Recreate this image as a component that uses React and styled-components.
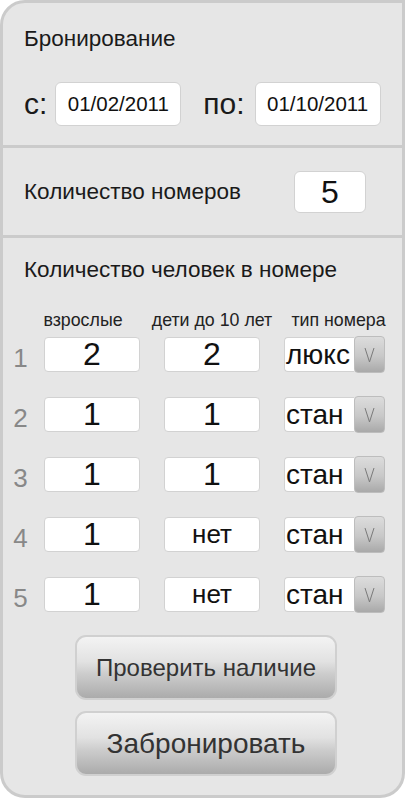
import React from 'react';
import styled, { createGlobalStyle } from 'styled-components';

const GlobalStyle = createGlobalStyle`
  html, body {
    margin: 0;
    padding: 0;
    background: #fff;
  }
  body {
    font-family: "Liberation Sans", Arial, sans-serif;
    color: #111;
  }
`;

const Panel = styled.div`
  box-sizing: border-box;
  width: 405px;
  height: 798px;
  background: #e6e6e6;
  border: 3px solid #cbcbcb;
  border-radius: 25px 0 25px 25px;
  display: flex;
  flex-direction: column;
  overflow: hidden;
`;

const Section = styled.div`
  box-sizing: border-box;
  height: ${(p) => (p.$h ? `${p.$h}px` : 'auto')};
  flex: ${(p) => (p.$h ? 'none' : '1')};
  padding: ${(p) => p.$pad || '0 0 0 21px'};
  border-bottom: ${(p) => (p.$last ? 'none' : '3px solid #cbcbcb')};
  display: flex;
  flex-direction: column;
`;

const Title = styled.div`
  font-size: 22.5px;
  line-height: 26px;
  color: #1a1a1a;
  white-space: nowrap;
`;

const DateRow = styled.div`
  display: flex;
  align-items: center;
  margin-top: 30px;
  height: 44px;
`;

const BigLabel = styled.span`
  font-size: ${(p) => p.$fs || 30}px;
  color: #1a1a1a;
  margin-right: ${(p) => p.$mr}px;
  margin-left: ${(p) => p.$ml || 0}px;
`;

const Field = styled.div`
  box-sizing: border-box;
  width: ${(p) => p.$w}px;
  height: ${(p) => p.$h}px;
  background: #fff;
  border: 1px solid #d2d2d2;
  border-radius: 6px;
  display: flex;
  align-items: center;
  justify-content: center;
  font-size: ${(p) => p.$fs}px;
  color: #111;
`;

const CountRow = styled.div`
  display: flex;
  align-items: center;
  justify-content: space-between;
  margin-top: 23px;
  padding-right: 36px;
`;

const Headers = styled.div`
  display: grid;
  grid-template-columns: 41px 96px 24px 96px 24px 101px;
  margin-top: 27px;
  margin-left: -21px;
  font-size: 17.8px;
  line-height: 20px;
  color: #222;
  white-space: nowrap;
`;

const Head = styled.div`
  grid-column: ${(p) => p.$col};
  justify-self: center;
  transform: translateX(${(p) => p.$dx || 0}px);
`;

const Rows = styled.div`
  display: grid;
  grid-template-columns: 41px 96px 24px 96px 24px 101px;
  grid-auto-rows: 35px;
  row-gap: 25px;
  margin-top: 7px;
  margin-left: -21px;
`;

const Num = styled.div`
  grid-column: 1;
  text-align: center;
  padding-right: 6px;
  font-size: 26px;
  line-height: 35px;
  color: #888;
  transform: translateY(4px);
`;

const Cell = styled(Field)`
  grid-column: ${(p) => p.$col};
  width: 96px;
  height: 35px;
  font-size: ${(p) => p.$fs}px;
  border-radius: 4px;
`;

const Select = styled.div`
  grid-column: 6;
  display: flex;
  align-items: center;
  height: 35px;
`;

const SelectValue = styled.div`
  box-sizing: border-box;
  width: 70px;
  height: 35px;
  background: #fff;
  border: 1px solid #d2d2d2;
  border-right: none;
  border-radius: 4px 0 0 4px;
  font-size: 28px;
  display: flex;
  align-items: center;
  padding-left: 1px;
  color: #111;
  white-space: nowrap;
  overflow: hidden;
`;

const SelectButton = styled.div`
  box-sizing: border-box;
  width: 31px;
  height: 37px;
  flex: none;
  border: 1px solid #bdbdbd;
  border-radius: 4px;
  background: linear-gradient(to bottom, #dcdcdc 0%, #c8c8c8 55%, #a9a9a9 100%);
  display: flex;
  align-items: center;
  justify-content: center;
`;

const Buttons = styled.div`
  display: flex;
  flex-direction: column;
  align-items: center;
  gap: 11px;
  margin-top: 23px;
  margin-left: -14px;
`;

const Button = styled.button`
  box-sizing: border-box;
  width: 262px;
  height: 65px;
  border: 2px solid #d0d0d0;
  border-radius: 11px;
  background: linear-gradient(
    to bottom,
    #f3f3f3 0%,
    #e2e2e2 40%,
    #cdcdcd 60%,
    #ababab 100%
  );
  font-family: "Liberation Sans", Arial, sans-serif;
  font-size: ${(p) => p.$fs}px;
  color: #333;
  padding: 0;
  white-space: nowrap;
`;

const rooms = [
  { a: '2', c: '2', t: 'люкс' },
  { a: '1', c: '1', t: 'стан' },
  { a: '1', c: '1', t: 'стан' },
  { a: '1', c: 'нет', t: 'стан' },
  { a: '1', c: 'нет', t: 'стан' },
];

function Chevron() {
  return (
    <svg width="11" height="16" viewBox="0 0 11 16">
      <polyline points="1,1 5.5,15 10,1" fill="none" stroke="#7a7a7a" strokeWidth="1" />
    </svg>
  );
}

export default function App() {
  return (
    <>
      <GlobalStyle />
      <Panel>
        <Section $h={145} $pad="23px 0 0 21px">
          <Title>Бронирование</Title>
          <DateRow>
            <BigLabel $mr={8}>с:</BigLabel>
            <Field $w={126} $h={44} $fs={20.5}>01/02/2011</Field>
            <BigLabel $ml={22} $mr={10}>по:</BigLabel>
            <Field $w={126} $h={44} $fs={20.5}>01/10/2011</Field>
          </DateRow>
        </Section>
        <Section $h={90} $pad="0 0 0 21px">
          <CountRow>
            <Title>Количество номеров</Title>
            <Field $w={72} $h={42} $fs={32}>5</Field>
          </CountRow>
        </Section>
        <Section $last $pad="19px 0 0 21px">
          <Title>Количество человек в номере</Title>
          <Headers>
            <Head $col={2} $dx={-9}>взрослые</Head>
            <Head $col={4}>дети до 10 лет</Head>
            <Head $col={6} $dx={4}>тип номера</Head>
          </Headers>
          <Rows>
            {rooms.map((r, i) => (
              <React.Fragment key={i}>
                <Num>{i + 1}</Num>
                <Cell $col={2} $fs={32}>{r.a}</Cell>
                <Cell $col={4} $fs={r.c === 'нет' ? 26 : 32}>{r.c}</Cell>
                <Select>
                  <SelectValue>{r.t}</SelectValue>
                  <SelectButton>
                    <Chevron />
                  </SelectButton>
                </Select>
              </React.Fragment>
            ))}
          </Rows>
          <Buttons>
            <Button $fs={24}>Проверить наличие</Button>
            <Button $fs={28}>Забронировать</Button>
          </Buttons>
        </Section>
      </Panel>
    </>
  );
}
